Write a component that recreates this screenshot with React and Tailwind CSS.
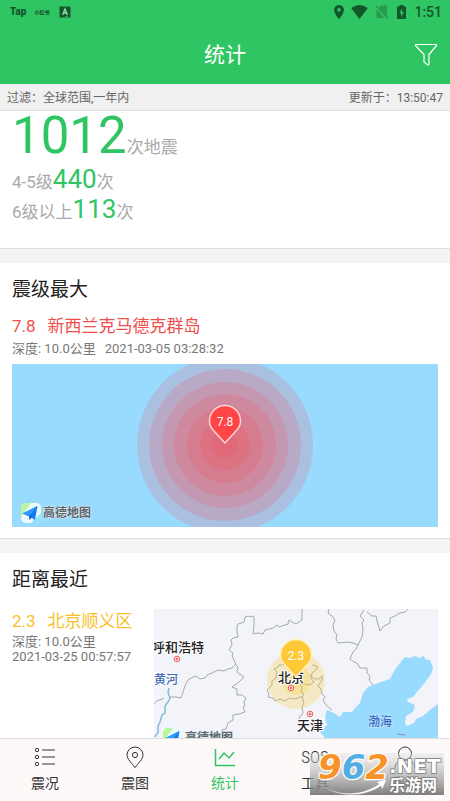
const tabs = [
  { key: 'list', label: '震况' },
  { key: 'map', label: '震图' },
  { key: 'stats', label: '统计' },
  { key: 'tools', label: '工具' },
  { key: 'me', label: '我的' },
]

const rings = [88, 76, 63, 51, 38, 25, 13]

function StatusBar() {
  return (
    <div className="flex h-6 items-center justify-between pr-2 pl-[10px] text-[#14562c]">
      <div className="flex items-center gap-2">
        <span className="text-[10px] leading-none font-black">Tap</span>
        <span className="text-[5px] leading-none font-black">小红书</span>
        <svg className="ml-[2px] h-3 w-3" viewBox="0 0 12 12">
          <rect x="0.5" y="0.5" width="11" height="11" rx="1" fill="currentColor" />
          <path d="M3.500 9 6 3l2.500 6M4.300 7h3.400" fill="none" stroke="#8fe0a9" strokeWidth="1.300" />
          <path d="M6 10.500h3" stroke="#8fe0a9" strokeWidth="0.500" />
        </svg>
      </div>
      <div className="flex items-center gap-[7px]">
        <svg className="h-4 w-[10px]" viewBox="0 0 10 16">
          <path d="M5 1a4.900 4.900 0 0 0-4.900 4.900C.1 9.500 5 15 5 15s4.900-5.500 4.900-9.100A4.900 4.900 0 0 0 5 1Zm0 6.700a1.800 1.800 0 1 1 0-3.600 1.800 1.800 0 0 1 0 3.600Z" fill="currentColor" />
        </svg>
        <svg className="h-4 w-[17px]" viewBox="0 0 17 16">
          <path d="M8.500 15 0.300 4.300C2.500 2.300 5.400 1 8.500 1s6 1.300 8.200 3.300Z" fill="currentColor" />
        </svg>
        <svg className="h-4 w-[14px]" viewBox="0 0 14 16">
          <path d="M5.500 1.500H12v11L3.800 4Z M1.500 5.500 9.500 14h-8Z" fill="#27994c" />
          <path d="m1 2 12 12.500" stroke="#27994c" strokeWidth="1.200" />
        </svg>
        <svg className="h-4 w-[11px]" viewBox="0 0 11 16">
          <path d="M3.500 1h4v1.500H10V15H1V2.500h2.500Z" fill="currentColor" />
          <path d="M6.200 4.500 3.300 9.300h1.900v3.700L8 8.200H6.200Z" fill="#2fc562" />
        </svg>
        <span className="text-sm leading-none font-medium">1:51</span>
      </div>
    </div>
  )
}

function AmapLogo({ x, y }) {
  return (
    <g transform={`translate(${x} ${y})`}>
      <rect width="20" height="20" rx="5" fill="#eefaff" />
      <path d="M5 0h5L0 14V5a5 5 0 0 1 5-5Z" fill="#b9f59b" />
      <path d="M10 20 20 10v5a5 5 0 0 1-5 5Z" fill="#8ce4fb" />
      <path d="m1.500 10.500 15-7.500-2.500 14-4.500-3Z" fill="#1479f5" />
      <path d="m1.500 10.500 15-7.500-8 9.500Z" fill="#2c9dff" />
      <path d="m8.500 12.500-.5 4.500 3-2.500Z" fill="#0757ca" />
      <text x="22" y="14" fontSize="12" fontWeight="700" fill="#5c676d" stroke="#e3edf2" strokeWidth="1" paintOrder="stroke">
        高德地图
      </text>
    </g>
  )
}

function Pin({ x, y, color, edge, value }) {
  return (
    <g transform={`translate(${x} ${y})`}>
      <path
        d="M0 0-11-12C-14-15-15.500-18-15.500-22a15.500 15.500 0 0 1 31 0C15.500-18 14-15 11-12Z"
        fill={color}
        stroke={edge}
        strokeWidth="1.500"
      />
      <text y="-17" textAnchor="middle" fontSize="12" fill="#fff">{value}</text>
    </g>
  )
}

function StrongestMap() {
  return (
    <svg className="block h-[163px] w-full bg-[#99daff]" viewBox="0 0 426 163" preserveAspectRatio="xMidYMid slice">
      {rings.map((r) => (
        <circle key={r} cx="213" cy="81" r={r} fill="#ff4146" fillOpacity="0.17" />
      ))}
      <Pin x={213} y={79} color="#ff4545" edge="#ffd5d9" value="7.8" />
      <AmapLogo x={9} y={139} />
    </svg>
  )
}

function City({ x, y }) {
  return (
    <g fill="#fff" stroke="#ee5a5a">
      <circle cx={x} cy={y} r="2.800" />
      <circle cx={x} cy={y} r="1" fill="#ee5a5a" />
    </g>
  )
}

function NearestMap() {
  return (
    <svg className="block h-[163px] w-full bg-[#f2f4fa]" viewBox="0 0 284 163" preserveAspectRatio="xMidYMin slice">
      <path
        d="M171 163V129L166 123 173 116 171 108 173 101 180 104 186 108 189 103 198 103 202 98 206 94 209 84 214 78 224 74 236 70 240 62 246 54 251 48 256 49 261 47 266 49 269 47 273 51 276 51 279 59 277 65 269 76 263 83 259 88 253 90 254 93 261 96 259 103 252 107 251 114 253 117 260 114 262 110 269 107 276 101 284 95V163Z"
        fill="#99daff"
      />
      <g fill="none" stroke="#a5a8ad" strokeLinejoin="round">
        <path d="M0 95 3 92 8 90 10 89M16 88l6 0 5 1 2-6 2-6 3-6 5-3 3-1 4 3 5-1 2-3 5-2 6-3 6 1 4-2 4-1 4-4" />
        <path d="M69 130 68 121 72 120 74 114 79 111 79 106 85 105 91 103 89 98 91 97 90 93 92 89 88 86 83 86 83 80 78 78 84 74 90 68 87 66 83 63 84 58 82 56 81 53 78 47 79 44 75 41 78 36 77 31 79 29 84 28 83 23 83 17 84 15 90 13 91 8 94 7 97 8 99 7 100 9 100 16 99 25 104 24 109 25 111 21 119 19 123 16 125 18 134 15 135 11 138 13 142 15 148 11V0" />
        <path d="M175 0 174 4 178 7 181 11 179 16 180 22 183 26 182 30 184 34 194 33 199 34 204 36 208 28 209 20 208 14 210 11 206 7 210 1" />
        <path d="m213 3 5 4h4l1 5 3 10 4-5 6-3v-5l5-2 5-3 5-1 3-3M204 36l-2 4-3 3-3 7 4 3 3 1 3 5 7 0v5l3 3-1 4 4 5" />
        <path d="m130 56-5 0-1 2-4 2 3 3-1 6-4 3 0 4-5 5 2 4-1 3 5 1 2 3 5-2 5 2 5-3 5 1 5-2 2 0 2-3-3-2 1-4-2-4 5 0 5 1 4-3-3-4 1-5 5-4v-3l-5-1" />
        <path d="m156 66 5 4 4 0 3-3 0 4-4 6 3 3 1 5 3 3-2 3 3 5 6 5M148 88l2 6-2 4 1 6-4 5 0 8" />
      </g>
      <path d="m15 79-1 5 2 5-2 4-3 4 0 7-3 2-2 7-2 4 0 7-4 4" fill="none" stroke="#88bbdc" strokeWidth="1.500" />
      <path d="m243 125 8 1" stroke="#80909c" />
      <circle cx="142" cy="71" r="29" fill="#ffcd36" fillOpacity="0.270" />
      <circle cx="142" cy="71" r="15" fill="#ffcd36" fillOpacity="0.270" />
      <City x={23} y={50} />
      <City x={137} y={79} />
      <City x={156} y={105} />
      <g fontWeight="500" fontSize="13" fill="#222" stroke="#fff" strokeWidth="2" paintOrder="stroke">
        <text x="-2" y="43">呼和浩特</text>
        <text x="124" y="73">北京</text>
        <text x="143" y="121">天津</text>
        <g fill="#3d67ba" fontSize="12">
          <text x="0" y="75">黄河</text>
          <text x="214" y="117" stroke="#b5e4ff">渤海</text>
        </g>
      </g>
      <Pin x={142} y={68} color="#fdc936" edge="#fff0b8" value="2.3" />
      <AmapLogo x={9} y={119} />
    </svg>
  )
}

function TabIcon({ name }) {
  if (name === 'tools') {
    return (
      <svg className="h-6 w-7" viewBox="0 0 28 24">
        <text x="14" y="18" textAnchor="middle" fontSize="17" fill="currentColor" className="font-['Roboto_Condensed','Liberation_Sans_Narrow','Roboto',sans-serif] font-light">SOS</text>
      </svg>
    )
  }
  return (
    <svg className="h-6 w-6" viewBox="0 0 24 24" fill="none" stroke="currentColor" strokeWidth="1">
      {name === 'list' && (
        <>
          <circle cx="4" cy="5" r="1.700" />
          <circle cx="4" cy="12" r="1.700" />
          <circle cx="4" cy="19" r="1.700" />
          <path d="M9 5h13M9 12h13M9 19h13" />
        </>
      )}
      {name === 'map' && (
        <>
          <path d="M12 22.500C9 18.500 4 14 4 10a8 8 0 0 1 16 0c0 4-5 8.500-8 12.500Z" />
          <circle cx="12" cy="10" r="2.600" />
        </>
      )}
      {name === 'stats' && <path d="M2.500 4v16.500H22M6 14l5-6 5 5 5-6" strokeWidth="1.500" />}
      {name === 'me' && (
        <>
          <circle cx="12" cy="8.500" r="6.500" />
          <path d="M2 23c0-5 4-8 10-8s10 3 10 8" />
        </>
      )}
    </svg>
  )
}

function Watermark() {
  return (
    <svg className="pointer-events-none absolute right-[6px] bottom-[6px] h-[42px] w-[134px]" viewBox="0 0 134 42">
      <defs>
        <linearGradient id="plate" x1="0" y1="0" x2="0" y2="1">
          <stop offset="0" stopColor="#ddd" stopOpacity="0.350" />
          <stop offset="1" stopColor="#777" stopOpacity="0.950" />
        </linearGradient>
      </defs>
      <rect width="134" height="42" fill="url(#plate)" />
      <text x="8" y="26" fontSize="34" stroke="#fff" strokeWidth="2.500" paintOrder="stroke" strokeLinejoin="round" className="font-['DejaVu_Sans',sans-serif] font-bold italic">
        <tspan fill="#f79329">9</tspan>
        <tspan fill="#55aee2">6</tspan>
        <tspan fill="#f79329">2</tspan>
      </text>
      <path d="M8 30c18 14 44 13 61 1l-3-2 11-3-5 11-1-4C52 46 24 44 8 30Z" fill="#fff" stroke="#999" strokeWidth="0.500" />
      <g fill="#fff" stroke="#777" strokeWidth="1.500" paintOrder="stroke">
        <text x="79" y="20" fontSize="20" className="font-['DejaVu_Sans',sans-serif] font-bold">.NET</text>
        <text x="79" y="38" fontSize="16" fontWeight="700">乐游网</text>
      </g>
    </svg>
  )
}

export default function App() {
  return (
    <div className="relative flex h-screen flex-col overflow-hidden bg-[#f4f4f4] font-['Roboto','Noto_Sans_CJK_SC',sans-serif]">
      <header className="shrink-0 bg-[#2fc562]">
        <StatusBar />
        <div className="grid h-[60px] grid-cols-[1fr_auto_1fr] items-center px-3 pt-[2px]">
          <h1 className="col-start-2 text-[21px] leading-[30px] text-white">统计</h1>
          <button type="button" aria-label="过滤" className="justify-self-end text-white">
            <svg className="h-6 w-6" viewBox="0 0 24 24" fill="none" stroke="currentColor" strokeWidth="1.200" strokeLinejoin="round">
              <path d="M2 1.500h20q.8 0 .5 1L15 11.500V21q-.3 1.500-1.500.8L10 19v-7.500L1.500 2.500q-.3-1 .5-1Z" />
            </svg>
          </button>
        </div>
      </header>

      <div className="flex h-[27px] shrink-0 items-center justify-between border-b border-[#dedede] bg-[#f0f0f0] px-[7px] pt-[2px] text-xs text-[#666]">
        <span>过滤：全球范围,一年内</span>
        <span>更新于：13:50:47</span>
      </div>

      <main className="flex min-h-0 flex-1 flex-col gap-[14px] overflow-hidden">
        <section className="shrink-0 border-b border-[#dedede] bg-white px-3 pt-px pb-[24px] text-[17px] leading-[17px] text-[#aaa]">
          <p className="mb-1">
            <span className="text-[51px] leading-[48px] text-[#2fc562]">1012</span>次地震
          </p>
          <p>
            4-5级<span className="text-[26px] leading-[30px] text-[#2fc562]">440</span>次
          </p>
          <p>
            6级以上<span className="text-[26px] leading-[30px] text-[#2fc562]">113</span>次
          </p>
        </section>

        <section className="shrink-0 border-b border-[#dedede] bg-white px-3 pt-[13px] pb-[11px]">
          <h2 className="text-[19px] leading-7 text-[#222]">震级最大</h2>
          <p className="mt-[10px] flex gap-3 text-[17px] leading-6 text-[#ef4d4d]">
            <span>7.8</span>
            <span>新西兰克马德克群岛</span>
          </p>
          <p className="mt-[2px] mb-[6px] flex gap-[9px] text-[13px] leading-[18px] text-[#777]">
            <span>深度: 10.0公里</span>
            <span>2021-03-05 03:28:32</span>
          </p>
          <StrongestMap />
        </section>

        <section className="shrink-0 bg-white px-3 pt-[13px] pb-[11px]">
          <h2 className="text-[19px] leading-7 text-[#222]">距离最近</h2>
          <div className="mt-[15px] grid grid-cols-[1fr_2fr]">
            <div className="whitespace-nowrap">
              <p className="mb-px flex gap-3 text-[17px] leading-6 text-[#f8bf26]">
                <span>2.3</span>
                <span>北京顺义区</span>
              </p>
              <p className="text-[13px] leading-[15px] text-[#777]">深度: 10.0公里</p>
              <p className="text-[13px] leading-[15px] text-[#777]">2021-03-25 00:57:57</p>
            </div>
            <NearestMap />
          </div>
        </section>
      </main>

      <nav className="grid h-[63px] shrink-0 grid-cols-5 border-t border-[#dedede] bg-[#fdf9f8]">
        {tabs.map((tab) => (
          <button
            key={tab.key}
            type="button"
            className={`flex flex-col items-center gap-1 pt-[6px] text-sm leading-5 ${tab.key === 'stats' ? 'text-[#2fc562]' : 'text-[#333]'}`}
          >
            <TabIcon name={tab.key} />
            {tab.label}
          </button>
        ))}
      </nav>

      <Watermark />
    </div>
  )
}
